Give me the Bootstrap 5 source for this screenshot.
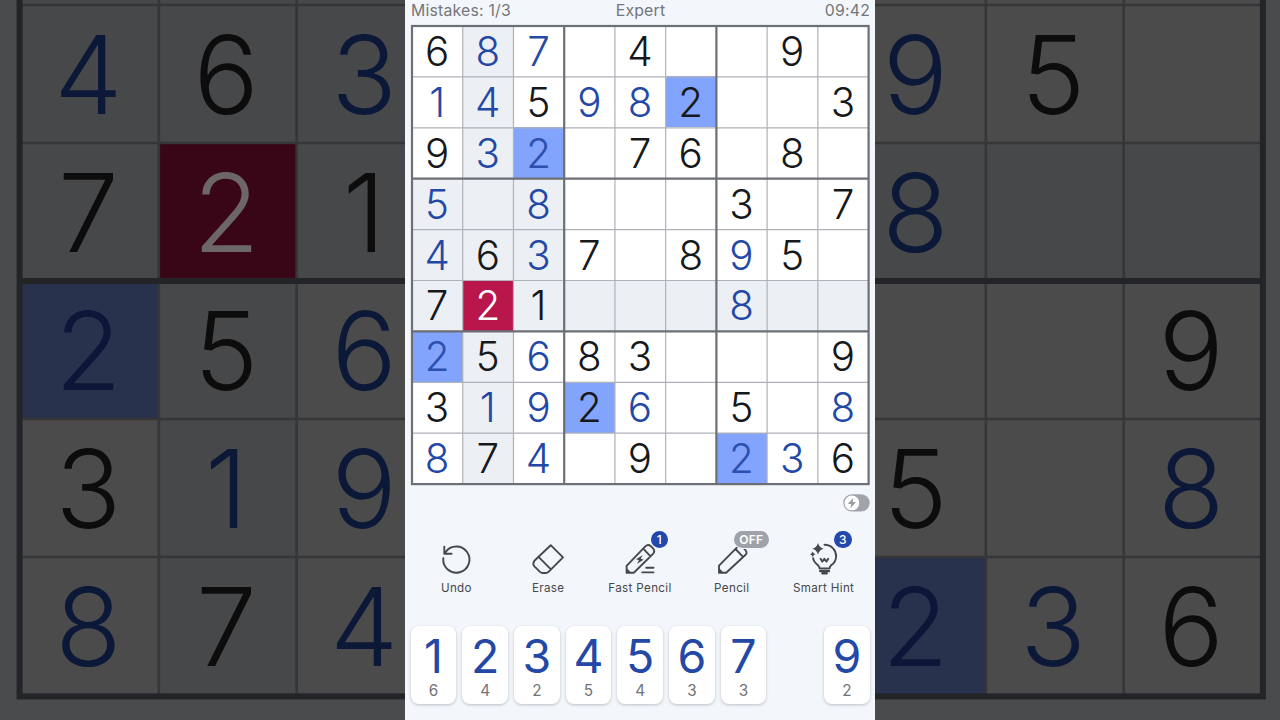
<!DOCTYPE html>
<html lang="en">
<head>
<meta charset="utf-8">
<meta name="viewport" content="width=device-width, initial-scale=1">
<title>Sudoku</title>
<link href="https://cdn.jsdelivr.net/npm/bootstrap@5.3.0/dist/css/bootstrap.min.css" rel="stylesheet">
<style>
  body { font-family: Inter, "Liberation Sans", sans-serif; width: 1280px; height: 720px; background: #4a4b4c; }
  .stage { width: 1280px; height: 720px; }
  .sudoku { display: grid; grid-template: repeat(9, 1fr) / repeat(9, 1fr); background: var(--paper); }
  .sudoku span { display: flex; align-items: center; justify-content: center; font-weight: 300; line-height: 1; color: var(--ink); min-width: 0; min-height: 0; }
  .sudoku .hl { background: var(--hl); }
  .sudoku .same { background: var(--same); }
  .sudoku .mine { color: var(--mine); }
  .sudoku .same.mine { color: var(--samemine); }
  .sudoku .wrong { background: var(--wrong); color: var(--wrongink); }
  .sudoku svg { position: absolute; inset: 0; width: 100%; height: 100%; overflow: visible; }
  .sudoku .thin { stroke: var(--thin); stroke-width: var(--thinw); }
  .sudoku .thick { stroke: var(--thick); stroke-width: var(--thickw); fill: none; }
  .big { --paper: #4b4b4b; --ink: #0c0c0d; --hl: #47484a; --same: #28324d; --mine: #0c1838; --samemine: #0b1638; --wrong: #380617; --wrongink: #6c6667; --thin: #353637; --thick: #222427; --thinw: 2.6px; --thickw: 6px;
    width: 1240.5px; height: 1242px; margin: -547.3px 0 0 20.5px; font-size: 108.5px; flex: none; }
  .big span { padding: 4px 2px 0 0; }
  .play { --paper: #fff; --ink: #16181b; --hl: #eceff4; --same: #82a4fc; --mine: #2348a6; --samemine: #2c4fb0; --wrong: #b9174c; --wrongink: #fff; --thin: #afb2b8; --thick: #6c6f76; --thinw: 1.2px; --thickw: 2.2px;
    width: 456.6px; height: 458.1px; margin-left: 7px; font-size: 40.3px; flex: none; }
  .play span { padding: 2.4px .6px 0 0; }
  .phone { width: 470px; height: 720px; background: #f3f6fa; overflow: hidden; }
  .status { height: 25.5px; padding: 0 5px 0 6px; font-size: 15.8px; line-height: 21px; color: #73767a; letter-spacing: .2px; }
  .status > * { flex: 1 1 0; }
  .switchrow { height: 37px; padding: 10.6px 5.2px 0 0; }
  .flash { width: 27px; height: 18px; display: block; }
  .tools { padding: 20px 5.5px 0; }
  .tool { flex: 1 1 0; color: #45484d; font-size: 11.6px; letter-spacing: .36px; line-height: 14px; font-weight: 400; }
  .tool svg { width: 36px; height: 36px; display: block; margin-bottom: 4px; fill: none; stroke: #45494e; stroke-width: 1.9; stroke-linecap: round; stroke-linejoin: round; }
  .tool svg .solid { fill: #45494e; stroke: none; }
  .pip { position: absolute; top: -10px; height: 17.4px; line-height: 17.8px; border-radius: 9px; color: #fff; font-weight: 500; font-size: 12px; letter-spacing: 0; text-align: center; background: #2348ab; width: 17.4px; left: 28.6px; }
  .pip.off { background: #9fa2a9; width: 34.6px; left: 20.2px; letter-spacing: .3px; font-weight: 600; box-shadow: 0 0 0 1px #f3f6fa; }
  .keys { display: grid; grid-template-columns: repeat(9, 1fr); gap: 6px; padding: 0 5.3px 0 5.7px; margin-top: 31.2px; }
  .key { height: 78.6px; border-radius: 8px; background: #fff; box-shadow: 0 1px 3px rgba(60,65,75,.3); color: #2348a6; font-size: 46.5px; line-height: 60px; font-weight: 400; }
  .key small { font-size: 15.3px; line-height: 10px; color: #717376; margin-top: .3px; font-weight: 400; }
</style>
</head>
<body class="m-0 overflow-hidden">
<div class="stage position-relative overflow-hidden d-flex justify-content-center">
  <div class="position-absolute top-0 start-0 w-100 h-100 overflow-hidden d-flex align-items-start" aria-hidden="true">
    <div class="sudoku big position-relative"></div>
  </div>

  <main class="phone position-relative d-flex flex-column">
    <header class="status d-flex justify-content-between">
      <span>Mistakes: 1/3</span><span class="text-center">Expert</span><span class="text-end">09:42</span>
    </header>

    <div class="sudoku play position-relative"></div>

    <div class="switchrow d-flex justify-content-end">
      <svg class="flash" viewBox="0 0 27 18"><rect x=".3" y=".3" width="26.4" height="17.2" rx="8.6" fill="#a0a3aa"/><circle cx="8.9" cy="8.9" r="7.4" fill="#fff"/><path d="M10.4 3.8 4.8 9.9H8.2L7.4 14.2 13 8H9.6Z" fill="#999ca3"/></svg>
    </div>

    <nav class="tools d-flex">
      <div class="tool d-flex flex-column align-items-center">
        <svg viewBox="0 0 36 36"><path d="M5.3 17.2A13.1 13.1 0 1 0 7.5 11.2M6.3 5.8V12.7H13.6"/></svg>
        <span>Undo</span>
      </div>
      <div class="tool d-flex flex-column align-items-center">
        <svg viewBox="0 0 36 36"><path d="M20.7 4.2 33 16.4 18.8 30.6Q17.5 32 15.7 32H12.8Q11.2 32 10 30.8L4.4 25.4Q2.3 22.8 4.4 19.8ZM8.5 15.9 21 28.3"/></svg>
        <span>Erase</span>
      </div>
      <div class="tool d-flex flex-column align-items-center">
        <div class="position-relative">
          <svg viewBox="0 0 36 36"><path d="M4.6 31.7V24.8L23.3 5.4Q26 2.7 28.9 5.2L31 7.4Q33.5 10.2 31 12.9L11.8 31.7ZM21.2 7.7 28.4 15.2M24.2 26.8H31.5M20.3 31.4H31.5"/><path class="solid" d="M4.6 27 9.3 31.7H4.6ZM20.9 13.9 14 18.2 17 19.2 14.8 22.9 21.6 18.7 18.7 17.5Z"/></svg>
          <span class="pip">1</span>
        </div>
        <span>Fast Pencil</span>
      </div>
      <div class="tool d-flex flex-column align-items-center">
        <div class="position-relative">
          <svg viewBox="0 0 36 36"><path d="M5 31.8V24.7L23 6.4Q26 3.5 29 6.4L31 8.6Q34 11.6 31.3 14L12.2 31.8ZM21.5 8 28.3 15.1"/><path class="solid" d="M5 27 9.8 31.8H5Z"/></svg>
          <span class="pip off">OFF</span>
        </div>
        <span>Pencil</span>
      </div>
      <div class="tool d-flex flex-column align-items-center">
        <div class="position-relative">
          <svg viewBox="0 0 36 36"><path d="M18.5 3.8C25.3 3.8 30.1 8.8 30.1 15.2C30.1 19.6 27.8 22.5 25 24.4Q23.8 25.3 23.5 27.5H13.6Q13.4 25.3 12.2 24.4C9.5 22.5 7.5 20.2 7.1 17.2M14.6 17.8 16.3 20.6 18.4 17.8 20.5 20.6 22.2 17.8"/><path d="M14.1 30.2H23M16.3 32.4H20.8" stroke-width="2.2"/><path class="solid" d="M12 2Q13.2 6.6 17.7 7.8 13.2 9 12 13.6 10.8 9 6.3 7.8 10.8 6.6 12 2ZM6.7 10.6Q7.3 12.7 9.4 13.3 7.3 13.9 6.7 16 6.1 13.9 4 13.3 6.1 12.7 6.7 10.6Z"/></svg>
          <span class="pip">3</span>
        </div>
        <span>Smart Hint</span>
      </div>
    </nav>

    <div class="keys"></div>
  </main>
</div>

<script src="https://cdn.jsdelivr.net/npm/bootstrap@5.3.0/dist/js/bootstrap.bundle.min.js"></script>
<script>
  // "." is an empty cell; an asterisk marks a digit entered by the player
  const rows = [
    "6 8* 7* . 4 . . 9 .",
    "1* 4* 5 9* 8* 2 . . 3",
    "9 3* 2* . 7 6 . 8 .",
    "5* . 8* . . . 3 . 7",
    "4* 6 3* 7 . 8 9* 5 .",
    "7 2* 1 . . . 8* . .",
    "2* 5 6* 8 3 . . . 9",
    "3 1* 9* 2 6* . 5 . 8*",
    "8* 7 4* . 9 . 2* 3* 6"
  ].map(r => r.split(" "));
  const selected = { r: 5, c: 1 };

  // the backdrop board only shows its lower rows, left and right of the phone
  const inBackdrop = (r, c) => r > 3 && (c < 3 || c > 5);

  const cells = big => rows.map((row, r) => row.map((v, c) => {
    const cls = [];
    const sameBox = Math.floor(r / 3) === Math.floor(selected.r / 3) && Math.floor(c / 3) === Math.floor(selected.c / 3);
    if (r === selected.r && c === selected.c) cls.push("wrong");
    else {
      if (v[0] === "2") cls.push("same");
      else if (r === selected.r || c === selected.c || sameBox) cls.push("hl");
      if (v.includes("*")) cls.push("mine");
    }
    const text = v[0] === "." || (big && !inBackdrop(r, c)) ? "" : v[0];
    return `<span class="${cls.join(" ")}">${text}</span>`;
  }).join("")).join("");

  document.querySelectorAll(".sudoku").forEach(board => {
    const w = parseFloat(getComputedStyle(board).width), h = parseFloat(getComputedStyle(board).height);
    const big = board.classList.contains("big"), out = big ? 1.4 : 0;
    let thin = "", thick = `<rect class="thick" x="${-out}" y="${-out}" width="${w + 2 * out}" height="${h + 2 * out}"/>`;
    for (let i = 1; i < 9; i++) {
      const k = i % 3 ? "thin" : "thick";
      const s = `<path class="${k}" d="M${w * i / 9} 0V${h}M0 ${h * i / 9}H${w}"/>`;
      if (i % 3) thin += s; else thick += s;
    }
    board.innerHTML = cells(big) + `<svg>${thin}${thick}</svg>`;
  });

  const left = [6, 4, 2, 5, 4, 3, 3, 0, 2];
  document.querySelector(".keys").innerHTML = left.map((n, i) =>
    n ? `<div class="key d-flex flex-column align-items-center"><span>${i + 1}</span><small>${n}</small></div>` : "<div></div>").join("");
</script>
</body>
</html>
